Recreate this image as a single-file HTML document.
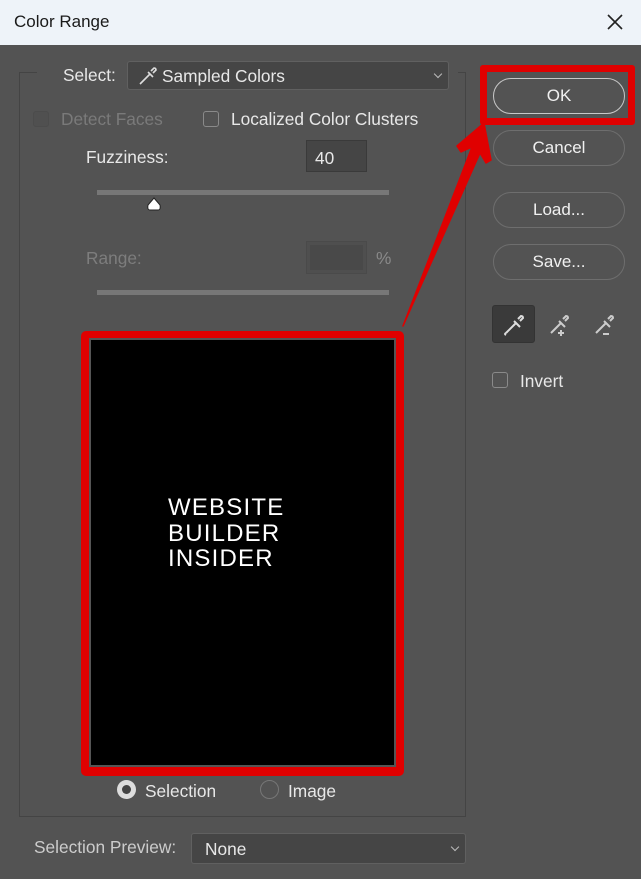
<!DOCTYPE html>
<html><head><style>
*{box-sizing:border-box;margin:0;padding:0}
body{width:641px;height:879px;background:#535353;font-family:"Liberation Sans",sans-serif;position:relative;overflow:hidden;color:#e8e8e8;font-size:17.3px}
.a{position:absolute}
.title{left:0;top:0;width:641px;height:45px;background:#eef3f9;color:#1a1a1a;font-size:17px}
.btn{position:absolute;left:493px;width:132px;height:36px;border:1.5px solid #6e6e6e;border-radius:18px;text-align:center;line-height:33px;color:#f0f0f0;font-size:17px}
.cb{position:absolute;width:16px;height:16px;border:1.5px solid #8a8a8a;border-radius:3px}
.dd{position:absolute;background:#454545;border:1px solid #606060;border-radius:3px}
.chev{position:absolute;width:6px;height:6px;border-right:1px solid #bbb;border-bottom:1px solid #bbb;transform:rotate(45deg)}
.track{position:absolute;left:97px;width:292px;height:5px;background:#777}
</style></head><body>
<div class="a title"><span class="a" style="left:14px;top:12px">Color Range</span>
<svg class="a" style="left:606px;top:13px" width="18" height="18"><path d="M2 2L16 16M16 2L2 16" stroke="#222" stroke-width="1.6"/></svg></div>
<div class="a" style="left:19px;top:72px;width:447px;height:745px;border:1px solid #444;border-top:none"></div>
<div class="a" style="left:19px;top:72px;width:18px;height:1px;background:#444"></div>
<div class="a" style="left:458px;top:72px;width:8px;height:1px;background:#444"></div>
<span class="a" style="left:63px;top:65px">Select:</span>
<div class="dd" style="left:127px;top:61px;width:322px;height:29px"></div>
<svg class="a" style="left:137px;top:65px" width="22" height="22"><path d="M4 18L13 9M11 7L16 12M14 6L17 3Q19 3 19 5L16 8M4 18l-1 1" stroke="#ddd" stroke-width="1.6" fill="none"/></svg>
<span class="a" style="left:162px;top:66px">Sampled Colors</span>
<div class="chev" style="left:435px;top:71px"></div>
<div class="cb" style="left:33px;top:111px;border-color:#4c4c4c;background:#505050"></div>
<span class="a" style="left:61px;top:109px;color:#7a7a7a">Detect Faces</span>
<div class="cb" style="left:203px;top:111px"></div>
<span class="a" style="left:231px;top:109px">Localized Color Clusters</span>
<span class="a" style="left:86px;top:147px">Fuzziness:</span>
<div class="a" style="left:306px;top:140px;width:61px;height:32px;background:#454545;border:1px solid #3a3a3a;padding:7px 0 0 8px">40</div>
<div class="track" style="top:190px"></div>
<svg class="a" style="left:146px;top:197px" width="16" height="16"><path d="M8 1L14 8Q15 13 12 13H4Q1 13 2 8Z" fill="#fff" stroke="#222"/></svg>
<span class="a" style="left:86px;top:248px;color:#7d7d7d">Range:</span>
<div class="a" style="left:306px;top:241px;width:61px;height:33px;border:1px solid #4a4a4a;background:#4f4f4f"><div style="margin:3px;height:25px;background:#494949"></div></div>
<span class="a" style="left:376px;top:248px;color:#8a8a8a">%</span>
<div class="track" style="top:290px"></div>
<div class="a" style="left:81px;top:331px;width:323px;height:445px;background:#e00000;border-radius:5px"></div>
<div class="a" style="left:89px;top:338px;width:307px;height:429px;background:#000;border:2px solid #555"></div>
<div class="a" style="left:168px;top:495px;color:#fff;font-size:24px;line-height:25.5px;letter-spacing:1.2px">WEBSITE<br>BUILDER<br>INSIDER</div>
<div class="a" style="left:117px;top:780px;width:19px;height:19px;border-radius:50%;background:#ddd"><div style="margin:5px;width:9px;height:9px;border-radius:50%;background:#444"></div></div>
<span class="a" style="left:145px;top:781px">Selection</span>
<div class="a" style="left:260px;top:780px;width:19px;height:19px;border-radius:50%;border:1.5px solid #777"></div>
<span class="a" style="left:288px;top:781px">Image</span>
<span class="a" style="left:34px;top:837px;color:#ccc">Selection Preview:</span>
<div class="dd" style="left:191px;top:833px;width:275px;height:31px"></div>
<span class="a" style="left:205px;top:839px">None</span>
<div class="chev" style="left:452px;top:844px"></div>
<div class="a" style="left:480px;top:65px;width:155px;height:60px;border:7px solid #e00000;border-radius:3px"></div>
<div class="btn" style="top:78px;border-color:#c8c8c8">OK</div>
<div class="btn" style="top:130px">Cancel</div>
<div class="btn" style="top:192px">Load...</div>
<div class="btn" style="top:244px">Save...</div>
<div class="a" style="left:492px;top:305px;width:43px;height:38px;background:#3a3a3a;border:1px solid #333;border-radius:3px"></div>
<svg class="a" style="left:501px;top:310px" width="26" height="28"><path d="M5 23L15 13M13 11L19 17M17 9L20 6Q22 6 22 8L19 11M5 23q-2 1 0 2" stroke="#ddd" stroke-width="2" fill="none"/></svg>
<svg class="a" style="left:546px;top:310px" width="26" height="28"><path d="M5 23L15 13M13 11L19 17M17 9L20 6Q22 6 22 8L19 11M15 20v6M12 23h6" stroke="#ccc" stroke-width="2" fill="none"/></svg>
<svg class="a" style="left:591px;top:310px" width="26" height="28"><path d="M5 23L15 13M13 11L19 17M17 9L20 6Q22 6 22 8L19 11M12 24h6" stroke="#ccc" stroke-width="2" fill="none"/></svg>
<div class="cb" style="left:492px;top:372px"></div>
<span class="a" style="left:520px;top:371px">Invert</span>
<svg class="a" style="left:0;top:0" width="641" height="879"><polygon points="484,123 457,146 461,152 472,147 403,326 480,153 486,163 491,160" fill="#e00000" stroke="#e00000" stroke-width="1.5" stroke-linejoin="round"/></svg>
</body></html>
